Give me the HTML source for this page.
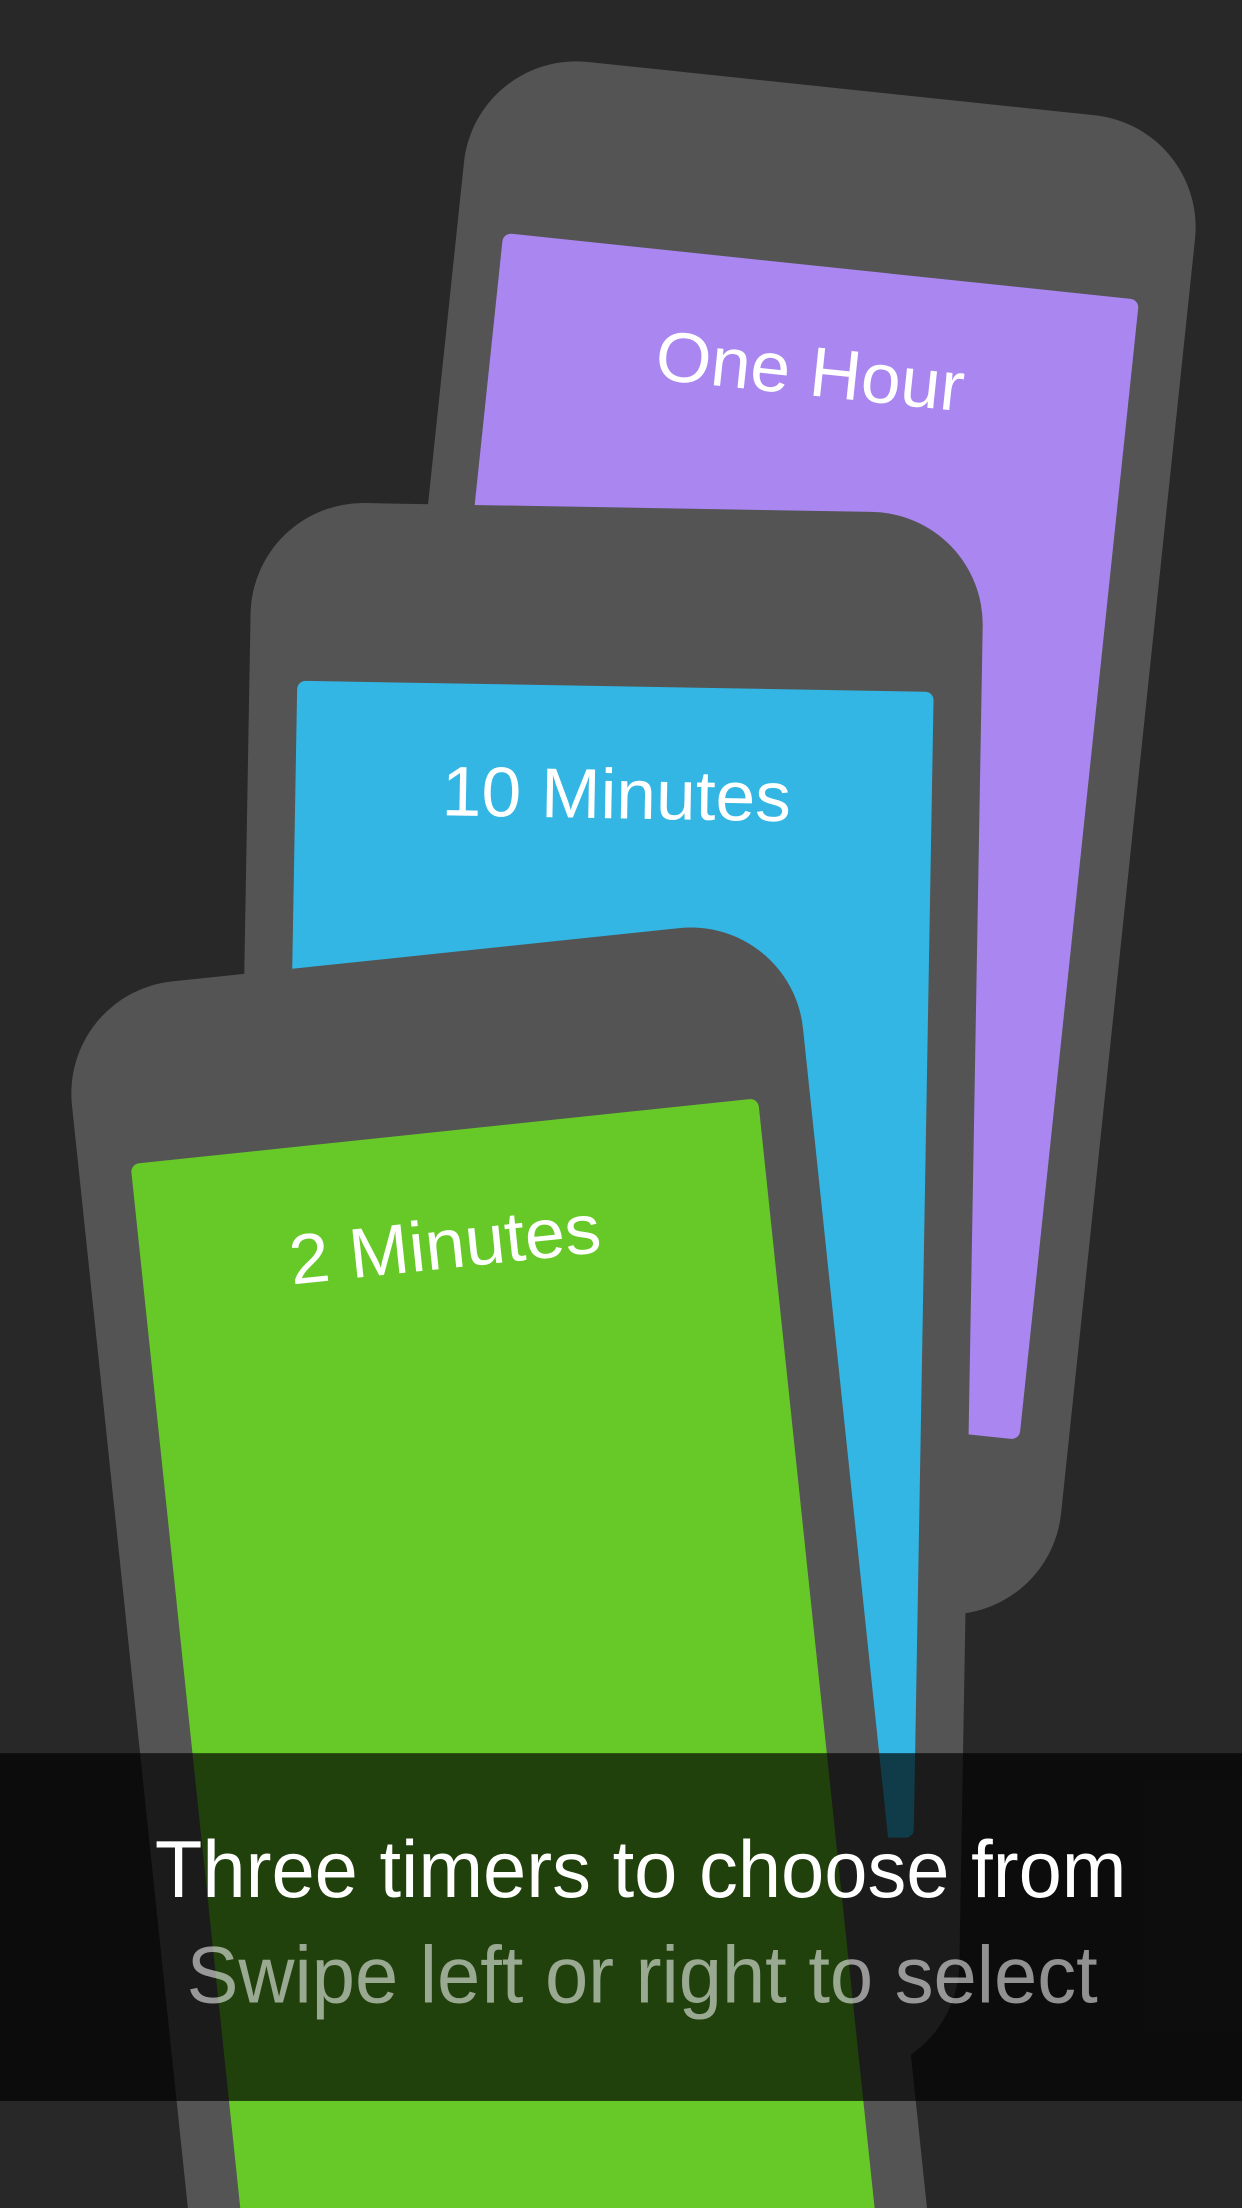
<!DOCTYPE html>
<html><head><meta charset="utf-8"><style>
html,body{margin:0;padding:0;background:#282828;width:1242px;height:2208px;overflow:hidden;}
svg{display:block;overflow:hidden;}
text{font-family:"Liberation Sans",sans-serif;}
</style></head><body>
<svg width="1242" height="2208" viewBox="0 0 882 1568" overflow="hidden" xmlns="http://www.w3.org/2000/svg">
<defs><clipPath id="c"><rect width="882" height="1568"/></clipPath></defs>
<g clip-path="url(#c)">
<rect width="882" height="1568" fill="#282828"/>
<g transform="rotate(6 541.5 595)">
<rect x="280.5" y="60" width="522" height="1070" rx="80" fill="#545454"/>
<rect x="313.5" y="187" width="454" height="814" rx="6" fill="#aa86f1"/>
<text x="540.5" y="279" font-size="50" fill="#fff" text-anchor="middle" textLength="220" lengthAdjust="spacingAndGlyphs">One Hour</text>
</g>
<g transform="rotate(1 429.6 915.3)">
<rect x="169.6" y="360.3" width="520" height="1110" rx="80" fill="#545454"/>
<rect x="203.6" y="487.3" width="452" height="814" rx="6" fill="#33b6e4"/>
<text x="431.6" y="581" font-size="50" fill="#fff" text-anchor="middle" textLength="248" lengthAdjust="spacingAndGlyphs">10 Minutes</text>
</g>
<g transform="rotate(-6 359.8 1225)">
<rect x="98.8" y="675" width="522" height="1100" rx="80" fill="#545454"/>
<rect x="135.8" y="801" width="448" height="950" rx="6" fill="#67c928"/>
<text x="351.8" y="898" font-size="50" fill="#fff" text-anchor="middle" textLength="222" lengthAdjust="spacingAndGlyphs">2 Minutes</text>
</g>
<rect x="0" y="1245" width="882" height="247" fill="rgba(0,0,0,0.68)"/>
<text x="455" y="1347" font-size="57" fill="#fff" text-anchor="middle" textLength="690" lengthAdjust="spacingAndGlyphs">Three timers to choose from</text>
<text x="456" y="1422" font-size="57" fill="#fff" fill-opacity="0.55" text-anchor="middle" textLength="647" lengthAdjust="spacingAndGlyphs">Swipe left or right to select</text>
</g>
</svg>
</body></html>
